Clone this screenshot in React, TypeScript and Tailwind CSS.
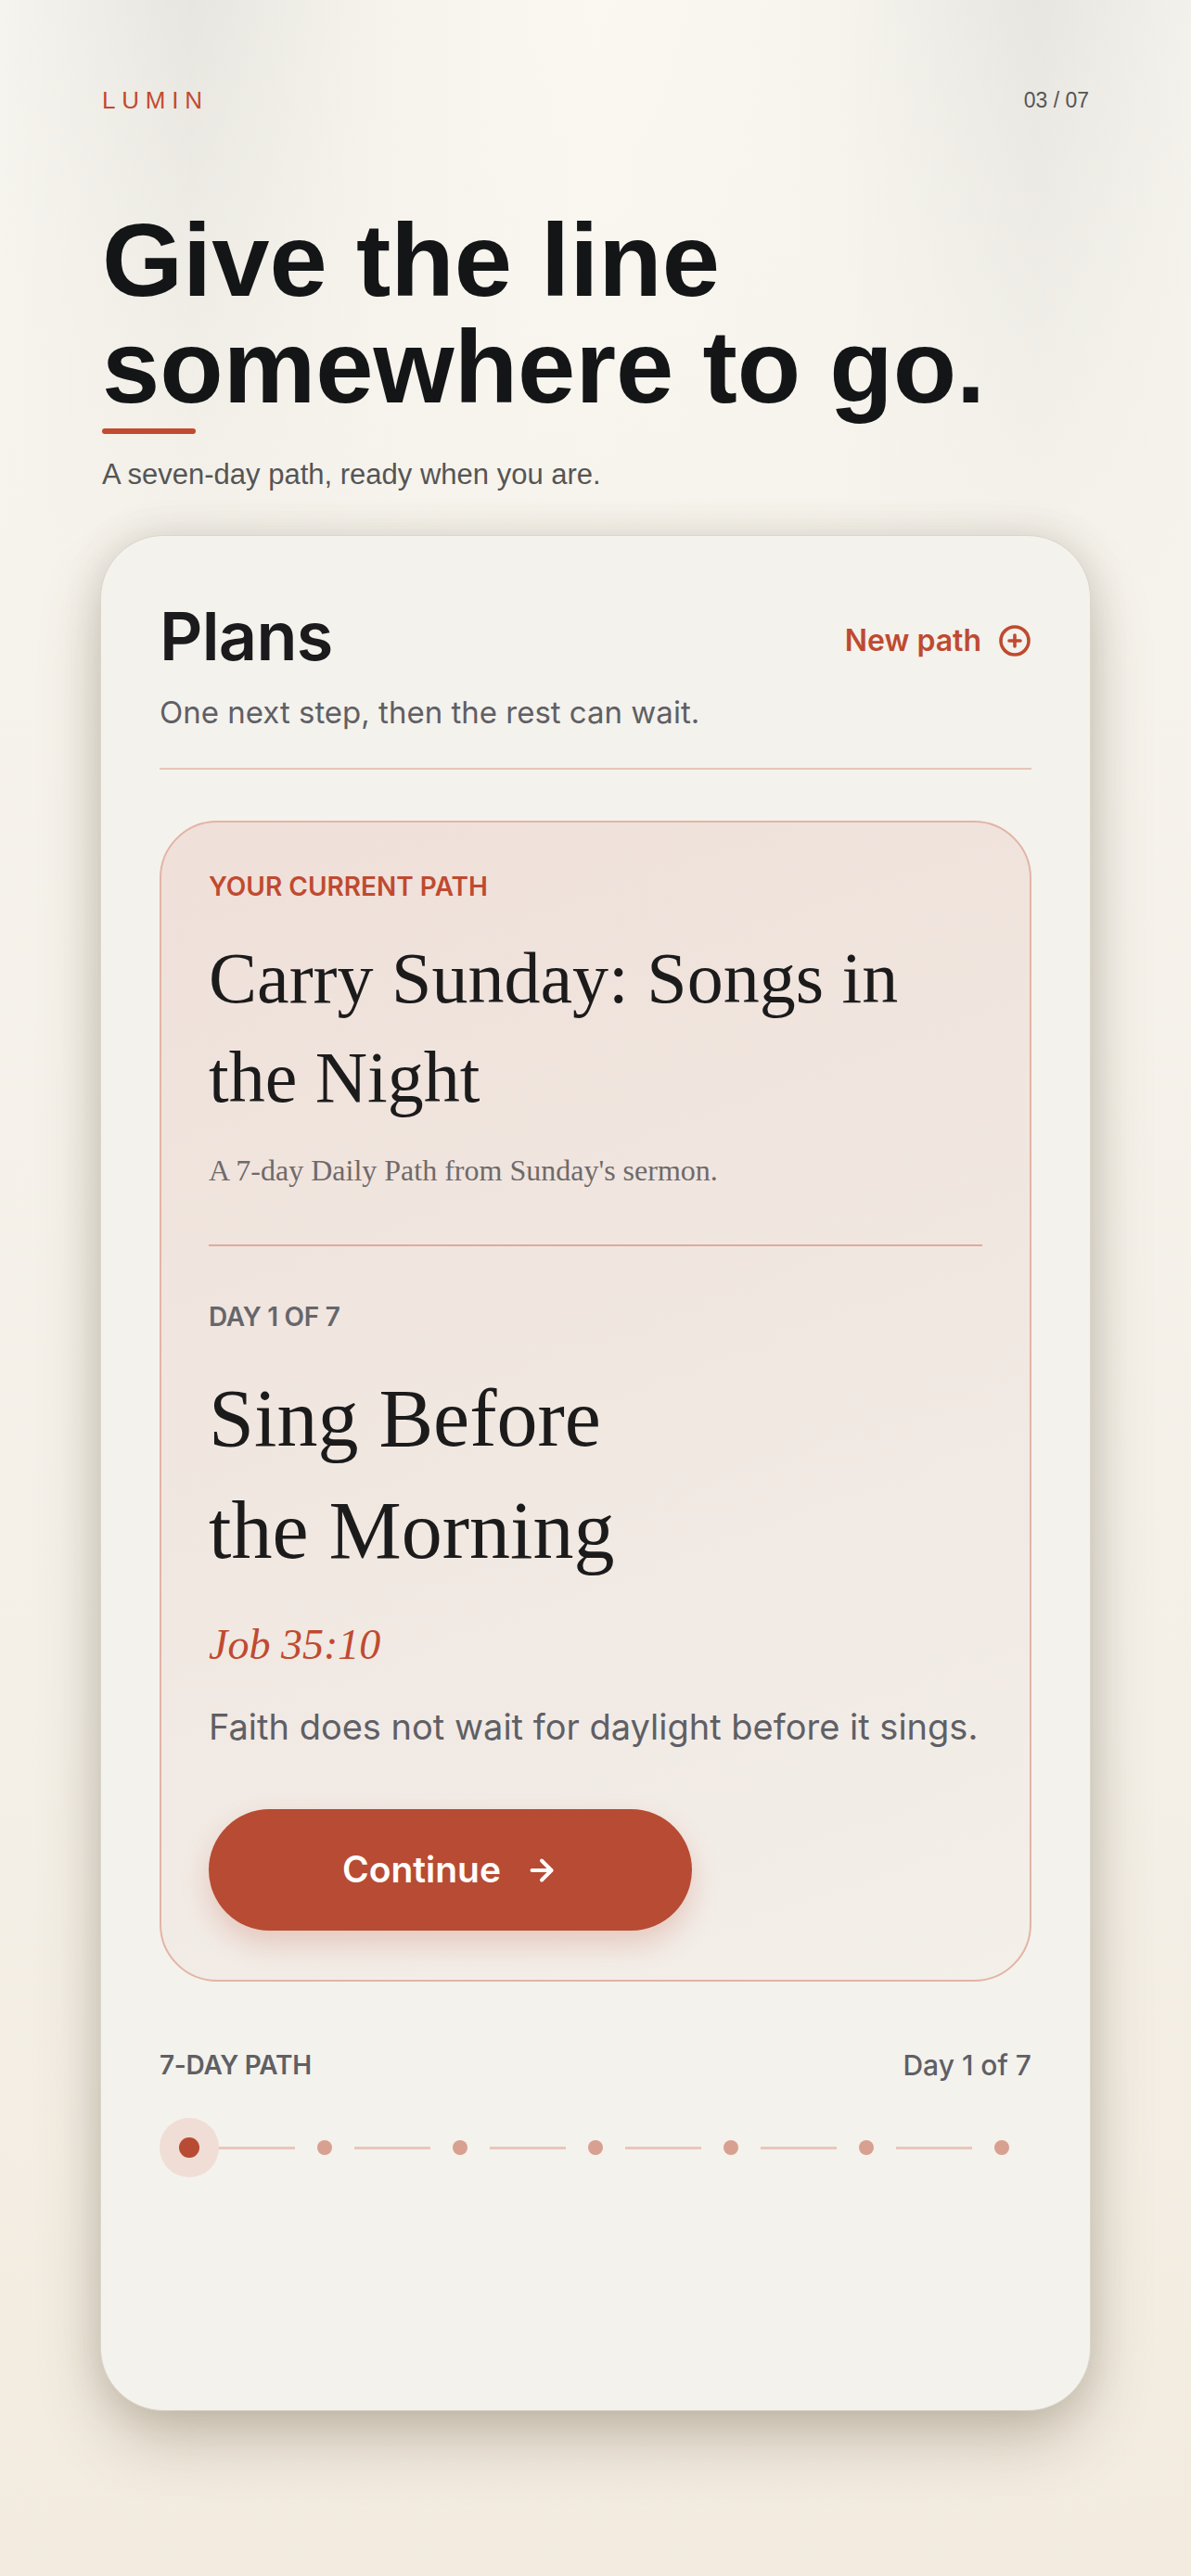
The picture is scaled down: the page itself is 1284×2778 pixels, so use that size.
import React from 'react';
import { ArrowRight, CirclePlus } from 'lucide-react';

const DAYS = [1, 2, 3, 4, 5, 6, 7];

export default function App() {
  const current = 1;

  return (
    <div className="min-h-screen w-full bg-[linear-gradient(180deg,rgba(248,246,239,0)_0%,rgba(247,244,237,0.55)_13%,#f6f3ec_24%,#f4f0e8_65%,#f3ebdf_100%),linear-gradient(90deg,#f6f4ee_0%,#e8e6e0_16%,#f5f3ec_32%,#faf8f1_50%,#f6f4ed_70%,#e8e6e1_87%,#f3f1eb_100%)] px-[108px] pt-[92px] pb-[178px]">
      {/* Top bar */}
      <header className="flex items-center justify-between px-[2px] font-['Liberation_Sans',Arial,sans-serif]">
        <span className="text-[26px] leading-[32px] tracking-[0.26em] text-[#c24a30]">LUMIN</span>
        <span className="text-[23px] leading-[32px] text-[#555555]">03 / 07</span>
      </header>

      {/* Hero */}
      <section className="px-[2px] font-['Liberation_Sans',Arial,sans-serif]">
        <h1 className="mt-[99px] text-[112px] font-bold leading-[115px] text-[#141517]">
          Give the line
          <br />
          somewhere to go.
        </h1>
        <div className="mt-[9px] h-[6px] w-[101px] rounded-full bg-[#c24a30]" />
        <p className="mt-[25px] text-[31px] leading-[38px] text-[#555555]">
          A seven-day path, ready when you are.
        </p>
      </section>

      {/* Plans card */}
      <main className="mt-[46px] h-[2023px] rounded-[68px] border border-[#dcd6ca] bg-[#f4f2ec] px-[63px] pt-[72px] shadow-[0_34px_70px_-6px_rgba(95,85,60,0.32),0_0_40px_rgba(95,85,60,0.16)] font-['Inter',sans-serif]">
        <div className="flex items-center justify-between">
          <h2 className="text-[72px] font-semibold leading-[72px] tracking-[-0.01em] text-[#1b1b1d]">Plans</h2>
          <button className="mt-[10px] flex items-center gap-[18px] text-[32px] font-semibold leading-[40px] text-[#bf4a30]">
            New path
            <CirclePlus size={36} strokeWidth={2.4} />
          </button>
        </div>
        <p className="mt-[26px] text-[33px] leading-[40px] text-[#5f5f66]">
          One next step, then the rest can wait.
        </p>
        <div className="mt-[40px] h-[2px] bg-[#e6c4ba]" />

        {/* Current path */}
        <section className="mt-[55px] rounded-[62px] border-2 border-[#e2b4a6] bg-[linear-gradient(160deg,#efe0d9_0%,#f1e8e2_55%,#f3efe9_100%)] px-[51px] pt-[52px] pb-[53px]">
          <p className="text-[28px] font-semibold leading-[34px] text-[#c04a30]">YOUR CURRENT PATH</p>
          <h3 className="mt-[28px] font-['Liberation_Serif','Times_New_Roman',serif] text-[78px] leading-[107px] text-[#1c1b1c]">
            Carry Sunday: Songs in the Night
          </h3>
          <p className="mt-[27px] font-['Liberation_Serif','Times_New_Roman',serif] text-[32px] leading-[40px] text-[#6f6a6a]">
            A 7-day Daily Path from Sunday&apos;s sermon.
          </p>
          <div className="mt-[60px] h-[2px] bg-[#dfab9d]" />

          <p className="mt-[60px] text-[28px] font-semibold leading-[32px] tracking-[-0.01em] text-[#66666b]">DAY 1 OF 7</p>
          <h4 className="mt-[33px] font-['Liberation_Serif','Times_New_Roman',serif] text-[88px] leading-[121px] text-[#1c1b1c]">
            Sing Before
            <br />
            the Morning
          </h4>
          <p className="mt-[35px] font-['Liberation_Serif','Times_New_Roman',serif] text-[46px] italic leading-[56px] text-[#c04a30]">
            Job 35:10
          </p>
          <p className="mt-[37px] text-[38px] leading-[46px] text-[#5f5f66]">
            Faith does not wait for daylight before it sings.
          </p>
          <button className="mt-[66px] flex h-[131px] w-[521px] items-center justify-center gap-[26px] rounded-full bg-[#b84b33] text-[39px] font-semibold text-white shadow-[0_14px_30px_rgba(184,75,51,0.22)]">
            Continue
            <ArrowRight size={36} strokeWidth={2.6} />
          </button>
        </section>

        {/* Progress */}
        <div className="mt-[73px] flex items-center justify-between">
          <span className="text-[28px] font-semibold leading-[34px] tracking-[-0.01em] text-[#5f5f66]">7-DAY PATH</span>
          <span className="text-[30px] font-medium leading-[34px] text-[#5f5f66]">Day 1 of 7</span>
        </div>
        <div className="mt-[40px] flex items-center">
          {DAYS.map((d) => (
            <React.Fragment key={d}>
              <div className="flex h-[64px] w-[64px] shrink-0 items-center justify-center">
                {d === current ? (
                  <div className="flex h-[64px] w-[64px] items-center justify-center rounded-full bg-[#f0ddd6]">
                    <div className="h-[22px] w-[22px] rounded-full bg-[#b84b33]" />
                  </div>
                ) : (
                  <div className="h-[16px] w-[16px] rounded-full bg-[#d8a090]" />
                )}
              </div>
              {d < DAYS.length && <div className="h-[3px] flex-1 bg-[#e8c6bb]" />}
            </React.Fragment>
          ))}
        </div>
      </main>
    </div>
  );
}
